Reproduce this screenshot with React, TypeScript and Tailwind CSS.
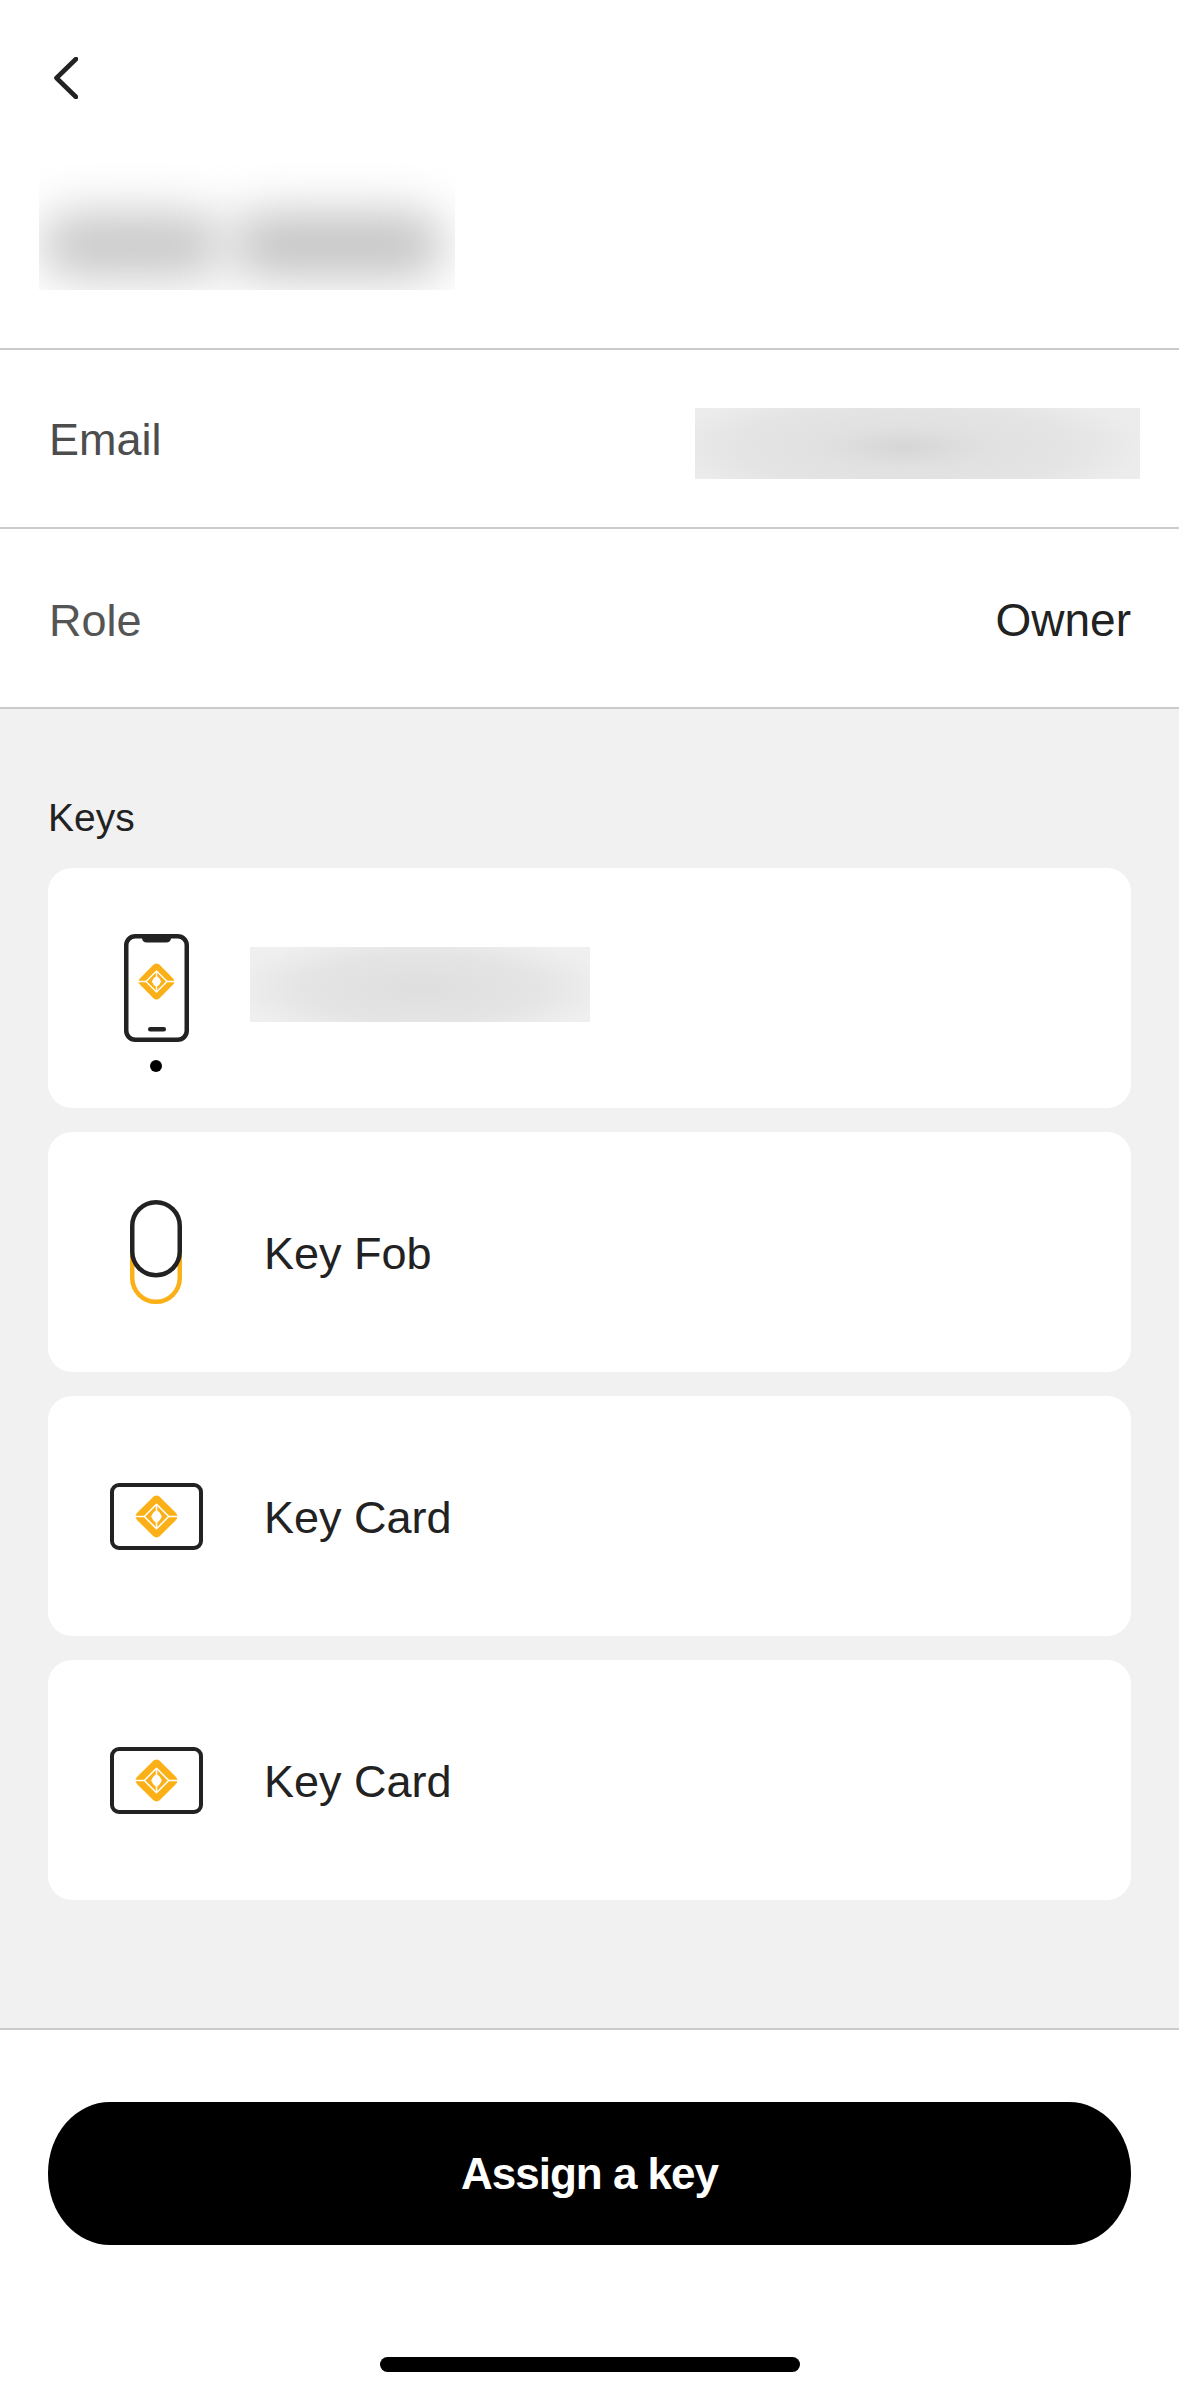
import type { ReactNode } from "react";

function RivianMark({ className }: { className: string }) {
  return (
    <svg viewBox="0 0 44 44" className={className}>
      <path
        d="M22 0.5 Q24.5 0.5 26 2.5 L41.5 18 Q45.5 22 41.5 26 L26 41.5 Q22 45.5 18 41.5 L2.5 26 Q-1.5 22 2.5 18 L18 2.5 Q19.5 0.5 22 0.5Z"
        fill="#fcb017"
      />
      <path d="M22 9.5 L34.5 22 L22 34.5 L9.5 22Z" fill="none" stroke="#fff" strokeWidth="1.6" strokeLinejoin="round" />
      <path d="M0 22 H10 M34 22 H44" stroke="#fff" strokeWidth="1.6" />
      <path d="M22 10 V34" stroke="#fff" strokeWidth="1.6" />
      <path d="M22 16 Q24 16 25.5 18.5 L27.5 22 L25.5 25.5 Q24 28 22 28 Q20 28 18.5 25.5 L16.5 22 L18.5 18.5 Q20 16 22 16Z" fill="#fff" />
    </svg>
  );
}

function PhoneIcon() {
  return (
    <div className="flex flex-col items-center gap-[18px] pt-[30px]">
      <svg viewBox="0 0 65 108" className="h-[108px] w-[65px]">
        <rect x="2.25" y="2.25" width="60.5" height="103.5" rx="9" fill="none" stroke="#222" strokeWidth="4.5" />
        <path d="M18 2 H47 V3.5 Q47 8.5 42 8.5 H23 Q18 8.5 18 3.5Z" fill="#222" />
        <rect x="24" y="93" width="18" height="4.5" rx="2.25" fill="#222" />
        <foreignObject x="14" y="29" width="37" height="37">
          <RivianMark className="h-[37px] w-[37px]" />
        </foreignObject>
      </svg>
      <span className="h-3 w-3 rounded-full bg-black" />
    </div>
  );
}

function FobIcon() {
  return (
    <svg viewBox="0 0 52 104" className="h-[104px] w-[52px]">
      <path d="M2.25 52 V78 A23.75 23.75 0 0 0 49.75 78 V52" fill="none" stroke="#fcb017" strokeWidth="4.5" />
      <rect x="2.25" y="2.25" width="47.5" height="73" rx="23.75" fill="#fff" stroke="#222" strokeWidth="4.5" />
    </svg>
  );
}

function CardIcon() {
  return (
    <div className="flex h-[67px] w-[93px] items-center justify-center rounded-[9px] border-[4.5px] border-[#222]">
      <RivianMark className="h-[43px] w-[43px]" />
    </div>
  );
}

function KeyRow({ icon, children }: { icon: ReactNode; children: ReactNode }) {
  return (
    <div className="flex h-[240px] items-center rounded-[24px] bg-white">
      <div className="flex w-[216px] shrink-0 justify-center">{icon}</div>
      {children}
    </div>
  );
}

export default function App() {
  return (
    <div className="flex h-[2396px] w-[1179px] flex-col overflow-hidden bg-white font-['Liberation_Sans',sans-serif]">
      <header className="h-[350px] shrink-0 border-b-2 border-[#cbcbcb] pt-[57px]">
        <svg viewBox="0 0 24 42" className="ml-[54px] h-[42px] w-[24px]">
          <path d="M22 2 L2.5 21 L22 40" fill="none" stroke="#222" strokeWidth="4.6" strokeLinecap="round" strokeLinejoin="round" />
        </svg>
        <div className="ml-[39px] mt-[64px] flex h-[127px] w-[416px] items-center gap-[6px] overflow-hidden pt-[36px]">
          <div className="h-[66px] w-[185px] shrink-0 rounded-full bg-[#c8c8c8] blur-[24px]" />
          <div className="h-[66px] w-[215px] shrink-0 rounded-full bg-[#c4c4c4] blur-[24px]" />
        </div>
      </header>

      <div className="flex h-[179px] shrink-0 items-center justify-between border-b-2 border-[#cbcbcb] pl-[49px] pr-[39px] text-[45px] text-[#4d4d4d]">
        <span className="pt-[3px]">Email</span>
        <div className="mt-[10px] h-[71px] w-[445px] bg-[radial-gradient(ellipse_240px_60px_at_47%_55%,#d6d6d6,#e1e1e1_35%,#e4e4e4_70%,#ececec)]" />
      </div>

      <div className="flex h-[180px] shrink-0 items-center justify-between border-b-2 border-[#cbcbcb] pl-[49px] pr-[48px] text-[45px] text-[#555]">
        <span className="pt-[5px]">Role</span>
        <span className="pt-[5px] text-[46px] text-[#222]">Owner</span>
      </div>

      <main className="flex flex-1 flex-col bg-[#f1f1f1] px-[48px] pt-[87px]">
        <h2 className="mb-[28px] text-[39px] leading-[44px] text-[#222]">Keys</h2>
        <div className="flex flex-col gap-[24px]">
          <KeyRow icon={<PhoneIcon />}>
            <div className="-ml-[14px] -mt-[8px] h-[75px] w-[340px] bg-[radial-gradient(ellipse_190px_55px_at_50%_55%,#dfdfdf,#e4e4e4_60%,#efefef)]" />
          </KeyRow>
          <KeyRow icon={<FobIcon />}>
            <span className="pt-[3px] text-[45px] text-[#222]">Key Fob</span>
          </KeyRow>
          <KeyRow icon={<CardIcon />}>
            <span className="pt-[3px] text-[45px] text-[#222]">Key Card</span>
          </KeyRow>
          <KeyRow icon={<CardIcon />}>
            <span className="pt-[3px] text-[45px] text-[#222]">Key Card</span>
          </KeyRow>
        </div>
      </main>

      <footer className="flex h-[368px] shrink-0 flex-col items-center border-t-2 border-[#cbcbcb] pt-[72px]">
        <button className="flex h-[143px] w-[1083px] items-center justify-center rounded-[62px_/_71px] bg-black text-[44px] font-bold tracking-[-1px] text-white">
          Assign a key
        </button>
        <div className="mt-[112px] h-[15px] w-[420px] rounded-full bg-black" />
      </footer>
    </div>
  );
}
